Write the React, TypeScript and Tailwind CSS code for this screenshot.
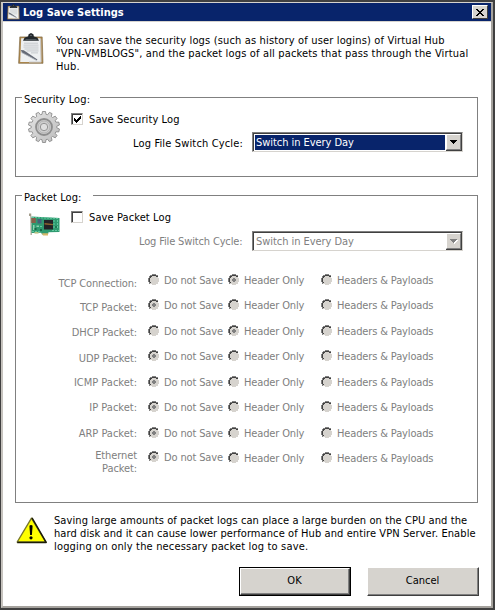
import type { ReactNode } from 'react';

const rows = [
  { label: 'TCP Connection:', value: 1, row: 'h-[25px]', labelPad: 'pt-[3px]', track: 'tracking-[-0.15px]' },
  { label: 'TCP Packet:', value: 0, row: 'h-[26px]', labelPad: 'pt-[2px]', track: '' },
  { label: 'DHCP Packet:', value: 1, row: 'h-[25px]', labelPad: 'pt-px', track: 'tracking-[-0.13px]' },
  { label: 'UDP Packet:', value: 0, row: 'h-[26px]', labelPad: 'pt-[2px]', track: 'tracking-[-0.13px]' },
  { label: 'ICMP Packet:', value: 0, row: 'h-[25px]', labelPad: '', track: '' },
  { label: 'IP Packet:', value: 0, row: 'h-[26px]', labelPad: '', track: '' },
  { label: 'ARP Packet:', value: 0, row: 'h-[22px]', labelPad: '', track: '' },
  { label: 'Ethernet Packet:', value: 0, row: 'h-[28px]', labelPad: '', track: 'tracking-[-0.1px]', last: true },
];

function Clipboard({ className }: { className: string }) {
  return (
    <svg className={className} viewBox="0 0 26 33" preserveAspectRatio="none">
      <path d="M1.8 4h22.4l.8 27.3H.6z" fill="#b08a4e" stroke="#75603c" strokeWidth=".6" />
      <path d="M3.2 5.5h19.3l.5 24.3H2.2z" fill="#eef0f1" />
      <path d="M22.7 6l.4 24H11" fill="none" stroke="#c4c6c9" strokeWidth="1" />
      <path d="M6 10.5h14M5.5 12.5h15M5.5 14.5h15M6.5 16.5h14M8.5 18.5h12M13 20.5h7" stroke="#c0c3c6" strokeWidth=".9" />
      <path d="M2.8 17.6l3 .2 13.6 9.6-.5 1L4 20.4z" fill="#666b76" />
      <path d="M3.5 20l14.5 8" stroke="#aeb2ba" strokeWidth=".8" />
      <path d="M5 8L6.7 4.6l3.4-1L10.6 1.4 13 0l2.4 1.4.5 2.2 3.4 1L21 8z" fill="#23282c" />
      <path d="M7.5 6.7h11" stroke="#5d666e" strokeWidth=".8" />
      <circle cx="13" cy="2.4" r=".7" fill="#8f969c" />
    </svg>
  );
}

const TEETH = 14;
const gearPoints = Array.from({ length: TEETH }, (_, i) => {
  const step = (Math.PI * 2) / TEETH;
  const a = i * step - Math.PI / 2;
  return [
    [-0.36, 12.8],
    [-0.21, 15.6],
    [0.21, 15.6],
    [0.36, 12.8],
  ]
    .map(([o, r]) => `${(16 + Math.cos(a + o * step) * r).toFixed(2)},${(16 + Math.sin(a + o * step) * r).toFixed(2)}`)
    .join(' ');
}).join(' ');

function Gear() {
  return (
    <svg className="size-8" viewBox="0 0 32 32">
      <defs>
        <linearGradient id="metal" x1="0" y1="0" x2="1" y2="1">
          <stop offset="0" stopColor="#e4e4e4" />
          <stop offset="1" stopColor="#bdbdbd" />
        </linearGradient>
      </defs>
      <polygon points={gearPoints} fill="url(#metal)" stroke="#8b8b8b" strokeWidth=".9" />
      <circle cx="16" cy="16" r="8" fill="#cfcfcf" stroke="#8d8d8d" strokeWidth="1.8" />
      <circle cx="16" cy="16" r="6" fill="none" stroke="#b4b4b4" strokeWidth="1" />
      <circle cx="16" cy="16" r="3.7" fill="#dedede" stroke="#949494" strokeWidth="1" />
    </svg>
  );
}

function NetworkCard() {
  return (
    <svg className="h-[24px] w-[32px]" viewBox="0 0 32 24">
      <path d="M0 .5h2.2l.6 21.5H1.6L1.3 3H0z" fill="#a39c8b" />
      <path d="M2.5 3.5L30.5 5v14l-11 .3-.5 2.2h-6l-.8-1.8L2.5 20z" fill="#2f9a70" />
      <path d="M3 4.5l27 1M3 18.5l9 .2M23 17.5h7M11 13.5h3M25 7v9M28.5 7v8" stroke="#63c9a0" strokeWidth="1" fill="none" strokeDasharray="2 1" />
      <path d="M2.3 5h4.5v5H2.3z" fill="#8a5f4a" />
      <path d="M8.5 6h4v4.5h-4z" fill="#45607a" />
      <path d="M4 12h1.5v5H4zM7.5 12.5H10V14H7.5z" fill="#8ed2b1" />
      <path d="M15 7h9v9.5h-9z" fill="#232227" />
      <path d="M15.5 10.8l8.5.8" stroke="#8f6630" strokeWidth="1.4" />
      <path d="M11 16h2v2h-2zM5.5 15h2v2h-2z" fill="#1a6648" />
      <path d="M13 20.3h6v2.2h-5z" fill="#d7b76a" />
      <path d="M5.5 19h4v1.6h-4z" fill="#b7c183" />
      <path d="M26 13h2v2h-2z" fill="#1f7853" />
    </svg>
  );
}

function Warning() {
  return (
    <svg className="h-[27px] w-[31px] shrink-0" viewBox="0 0 31 27">
      <path d="M15.5 1.2L29.7 25H1.2z" fill="#ff0" stroke="#77772a" strokeWidth="1.4" strokeLinejoin="round" />
      <path d="M16 .8L30.2 25.4H1.2" fill="none" stroke="#1c1c08" strokeWidth="1.5" strokeLinejoin="round" />
      <path d="M13.4 8.7q1.6-1.4 3.2 0L15.9 18h-1.8z" fill="#000" />
      <circle cx="15" cy="20.8" r="1.6" fill="#000" />
    </svg>
  );
}

function Checkbox({ checked, children }: { checked?: boolean; children: ReactNode }) {
  return (
    <label className="flex h-[13px]">
      <span className="block h-[12px] w-[12px] border border-t-[#808080] border-r-[#d6d3ce] border-b-[#d6d3ce] border-l-[#808080]">
        <span className="block size-full border-t border-l border-[#404040]">
          {checked && (
            <svg className="block size-[9px]" viewBox="0 0 9 9" shapeRendering="crispEdges">
              <path d="M1 3h1v1h1v1h1V4h1V3h1V2h1V1h1v3H7v1H6v1H5v1H4v1H3V7H2V6H1z" fill="#000" />
            </svg>
          )}
        </span>
      </span>
      <span className="ml-[6px] tracking-[0.1px]">{children}</span>
    </label>
  );
}

function Combo({ disabled }: { disabled?: boolean }) {
  return (
    <div className="h-[20px] w-[211px] border border-t-[#808080] border-r-[#d6d3ce] border-b-[#d6d3ce] border-l-[#808080]">
      <div className="flex size-full border-t border-l border-[#404040]">
        <div
          className={
            disabled
              ? 'm-px h-[15px] w-[190px] pl-px leading-[15px] tracking-[-0.05px] text-[#808080]'
              : 'm-px h-[15px] w-[190px] bg-[#08246b] pl-px leading-[15px] tracking-[-0.05px] text-white'
          }
        >
          Switch in Every Day
        </div>
        <div className="flex h-[17px] w-[16px] items-center justify-center border-r border-b border-[#404040] bg-[#d6d3ce]">
          <div className="flex size-full items-center justify-center border border-t-white border-r-[#808080] border-b-[#808080] border-l-white">
            <svg className="h-[5px] w-[8px]" viewBox="0 0 8 5" shapeRendering="crispEdges">
              {disabled && <path d="M1 1h7v1H7v1H6v1H5v1H4V4H3V3H2V2H1z" fill="#fff" />}
              <path d="M0 0h7v1H6v1H5v1H4v1H3V3H2V2H1V1H0z" fill={disabled ? '#808080' : '#000'} />
            </svg>
          </div>
        </div>
      </div>
    </div>
  );
}

function Radio({ on }: { on: boolean }) {
  return (
    <svg className="size-[12px] shrink-0" viewBox="0 0 12 12" shapeRendering="crispEdges">
      <path d="M4 1h4v1h2v2h1v4h-1v2H8v1H4v-1H2V8H1V4h1V2h2z" fill="#d6d3ce" />
      <path d="M4 0h4v1H4zM2 1h2v1H2zM8 1h2v1H8zM1 2h1v2H1zM0 4h1v4H0zM1 8h1v2H1z" fill="#808080" />
      <path d="M4 1h4v1H4zM2 2h2v1H2zM8 2h2v1H8zM2 3h1v1H2zM1 4h1v4H1zM2 8h1v1H2z" fill="#404040" />
      {on && <path d="M5 4h2v1h1v2H7v1H5V7H4V5h1z" fill="#808080" />}
    </svg>
  );
}

function Option({ on, children, className }: { on: boolean; children: ReactNode; className: string }) {
  return (
    <label className={`flex ${className}`}>
      <Radio on={on} />
      <span className="ml-[4px] tracking-[-0.14px]">{children}</span>
    </label>
  );
}

export default function App() {
  return (
    <div className="h-[610px] w-[495px] bg-[#404040] pt-[2px] pr-[2px] pb-[2px] pl-px font-['DejaVu_Sans_Condensed','DejaVu_Sans',sans-serif] text-[11px] leading-[13px] whitespace-nowrap text-black [font-stretch:condensed]">
      <div className="flex h-full flex-col border-t border-r-2 border-b-2 border-l-2 border-t-[#d6d3ce] border-r-[#a5a29d] border-b-[#a5a29d] border-l-[#c6c3be] bg-white">
        <header className="flex h-[19px] shrink-0 items-start border-b border-[#d6d3ce] bg-[#08246b] pl-[4px] text-white">
          <Clipboard className="mt-px h-[16px] w-[13px]" />
          <h1 className="mt-[3px] ml-[3px] font-bold">Log Save Settings</h1>
          <button className="mt-[2px] mr-[3px] ml-auto h-[14px] w-[16px] border border-t-white border-r-[#404040] border-b-[#404040] border-l-white bg-[#d6d3ce]">
            <svg className="mx-auto block h-[7px] w-[8px]" viewBox="0 0 8 7" shapeRendering="crispEdges">
              <path d="M0 0h2v1h1v1h2V1h1V0h2v1H7v1H6v1H5v1h1v1h1v1h1v1H6V6H5V5H3v1H2v1H0V6h1V5h1V4h1V3H2V2H1V1H0z" fill="#000" />
            </svg>
          </button>
        </header>

        <section className="flex h-[75px] shrink-0 pt-[11px] pl-[15px]">
          <Clipboard className="h-[32px] w-[26px] shrink-0" />
          <p className="ml-[12px] pt-px tracking-[0.16px]">
            <span className="block">You can save the security logs (such as history of user logins) of Virtual Hub</span>
            <span className="block">"VPN-VMBLOGS", and the packet logs of all packets that pass through the Virtual</span>
            <span className="block">Hub.</span>
          </p>
        </section>

        <section className="ml-[12px] h-[80px] w-[463px] shrink-0 border border-[#808080]">
          <h2 className="-mt-[5px] ml-[6px] w-[78px] bg-white pl-[2px] tracking-[0.1px]">Security Log:</h2>
          <div className="flex pt-[5px] pl-[12px]">
            <Gear />
            <div className="ml-[11px] pt-[2px]">
              <Checkbox checked>Save Security Log</Checkbox>
              <div className="mt-[6px] flex">
                <span className="mt-[5px] ml-[62px] w-[119px] tracking-[0.15px]">Log File Switch Cycle:</span>
                <Combo />
              </div>
            </div>
          </div>
        </section>

        <section className="mt-[18px] ml-[12px] h-[308px] w-[463px] shrink-0 border border-[#808080]">
          <h2 className="-mt-[5px] ml-[6px] w-[71px] bg-white pl-[2px] tracking-[0.1px]">Packet Log:</h2>
          <div className="flex h-[70px] pt-[7px] pl-[13px]">
            <div className="pt-[2px]">
              <NetworkCard />
            </div>
            <div className="ml-[10px]">
              <Checkbox>Save Packet Log</Checkbox>
              <div className="mt-[7px] flex text-[#808080]">
                <span className="mt-[4px] ml-[68px] w-[113px] tracking-[-0.15px]">Log File Switch Cycle:</span>
                <Combo disabled />
              </div>
            </div>
          </div>
          <div className="text-[#808080]">
            {rows.map((r) => (
              <div key={r.label} className={`flex ${r.row}`}>
                <span className={`w-[121px] text-right ${r.labelPad} ${r.track}`}>
                  {r.last ? (
                    <>
                      Ethernet
                      <br />
                      Packet:
                    </>
                  ) : (
                    r.label
                  )}
                </span>
                <div className={r.last ? 'ml-[11px] flex pt-[2px]' : 'ml-[11px] flex'}>
                  <Option on={r.value === 0} className="w-[80px]">
                    Do not Save
                  </Option>
                  <Option on={r.value === 1} className={r.last ? 'w-[93px] pt-px' : 'w-[93px]'}>
                    Header Only
                  </Option>
                  <Option on={false} className={r.last ? 'pt-px' : ''}>
                    Headers &amp; Payloads
                  </Option>
                </div>
              </div>
            ))}
          </div>
        </section>

        <section className="flex h-[64px] shrink-0 pt-[11px] pl-[13px]">
          <div className="pt-[3px]">
            <Warning />
          </div>
          <p className="ml-[7px] tracking-[0.09px]">
            <span className="block">Saving large amounts of packet logs can place a large burden on the CPU and the</span>
            <span className="block">hard disk and it can cause lower performance of Hub and entire VPN Server. Enable</span>
            <span className="block tracking-[0.17px]">logging on only the necessary packet log to save.</span>
          </p>
        </section>

        <footer className="flex gap-[16px] pl-[236px]">
          <button className="h-[29px] w-[112px] border border-black bg-[#d6d3ce]">
            <span className="block size-full border border-t-white border-r-[#404040] border-b-[#404040] border-l-white">
              <span className="block size-full border-r border-b border-[#808080] pt-[5px]">OK</span>
            </span>
          </button>
          <button className="h-[29px] w-[112px] border border-t-white border-r-[#404040] border-b-[#404040] border-l-white bg-[#d6d3ce]">
            <span className="block size-full border-r border-b border-[#808080] pt-[6px]">Cancel</span>
          </button>
        </footer>
      </div>
    </div>
  );
}
